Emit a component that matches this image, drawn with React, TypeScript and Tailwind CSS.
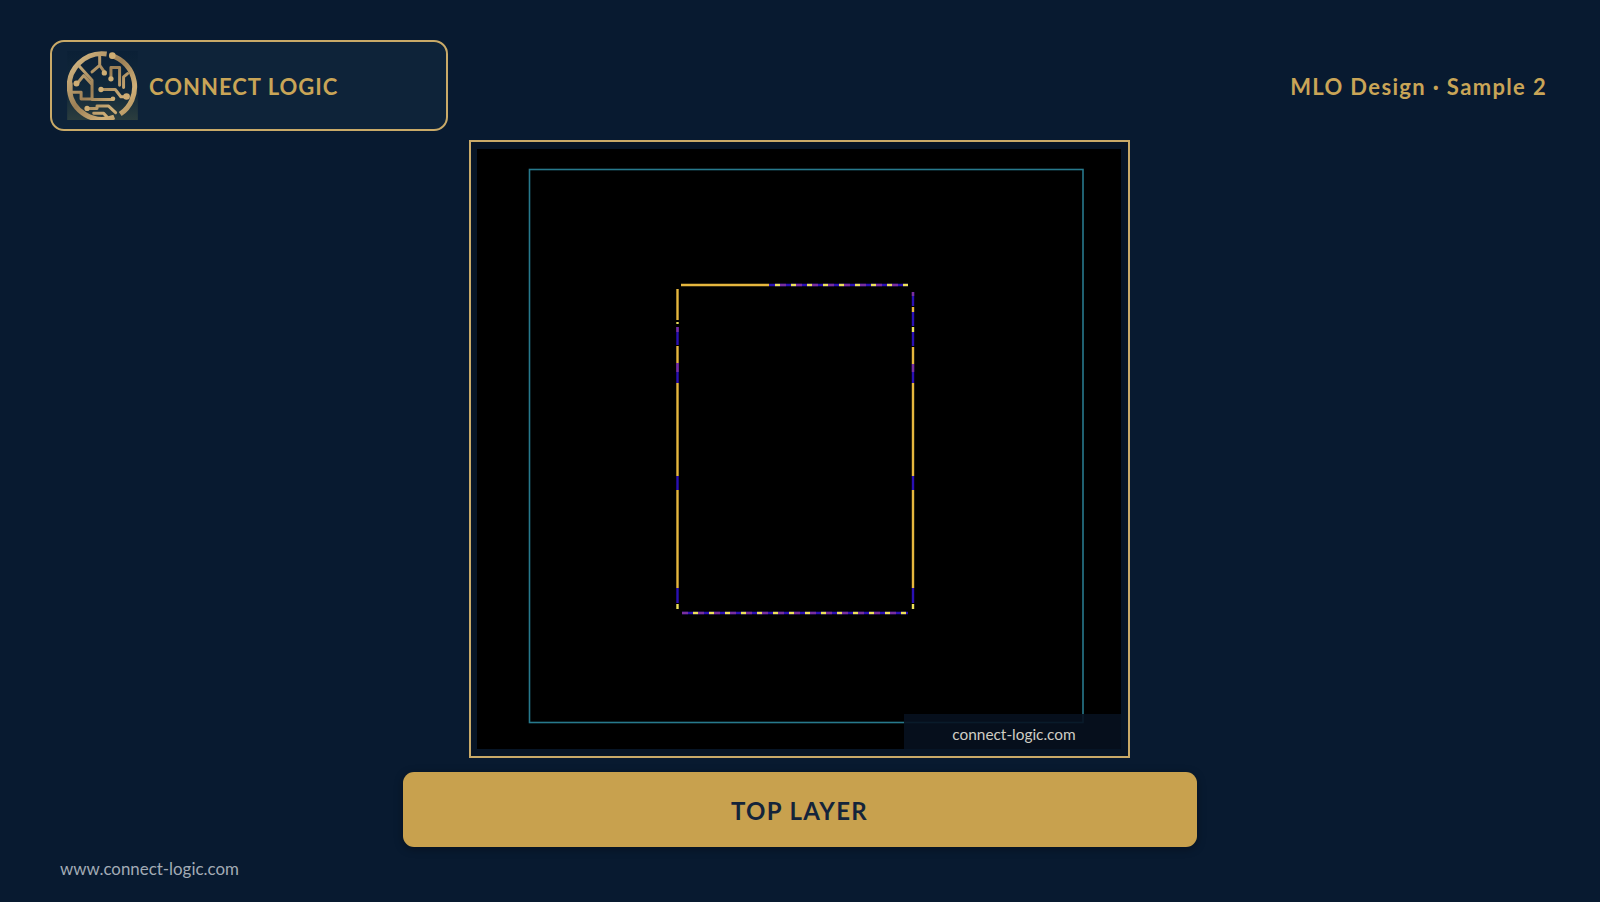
const GOLD = "#e6b73e";
const YELLOW = "#ece05a";
const BLUE = "#2a10b4";
const PURPLE = "#7a2f9e";

// [start, end, colour] runs along each edge of the board outline
type Run = [number, number, string];

function dashedRuns(from: number, to: number, firstDash: number): Run[] {
  const runs: Run[] = [];
  runs.push([from, to, BLUE]);
  for (let x = firstDash - 16; x < to; x += 16) {
    if (x + 5 < from) continue;
    if (x + 11 <= to) runs.push([x + 5, x + 11, PURPLE]);
    if (x >= from) runs.push([x, x + 5, YELLOW]);
  }
  return runs;
}

const topRuns: Run[] = [[681, 769, GOLD], ...dashedRuns(769, 908, 791)];
const bottomRuns: Run[] = dashedRuns(682, 908, 693);
const leftRuns: Run[] = [
  [289, 320, GOLD],
  [322, 324, YELLOW],
  [327, 345, BLUE],
  [327, 332, PURPLE],
  [346, 363, GOLD],
  [363, 383, BLUE],
  [363, 372, PURPLE],
  [383, 476, GOLD],
  [476, 490, BLUE],
  [490, 588, GOLD],
  [588, 603, BLUE],
  [604, 609, YELLOW],
];
const rightRuns: Run[] = [
  [292, 306, BLUE],
  [292, 296, PURPLE],
  [307, 312, GOLD],
  [312, 326, BLUE],
  [327, 332, YELLOW],
  [332, 346, BLUE],
  [347, 364, GOLD],
  [364, 383, BLUE],
  [364, 372, PURPLE],
  [383, 476, GOLD],
  [476, 490, BLUE],
  [490, 588, GOLD],
  [588, 603, BLUE],
  [604, 609, YELLOW],
];

function LayerDrawing() {
  return (
    <svg viewBox="477 149 644 600" className="block w-[644px] h-[600px]">
      <rect x="529.5" y="169.5" width="553.5" height="553" fill="none" stroke="#27798c" strokeWidth="1.6" />
      {topRuns.map(([a, b, c], i) => (
        <line key={"t" + i} x1={a} x2={b} y1="285" y2="285" stroke={c} strokeWidth="2.4" />
      ))}
      {bottomRuns.map(([a, b, c], i) => (
        <line key={"b" + i} x1={a} x2={b} y1="613" y2="613" stroke={c} strokeWidth="2.4" />
      ))}
      {leftRuns.map(([a, b, c], i) => (
        <line key={"l" + i} x1="677.5" x2="677.5" y1={a} y2={b} stroke={c} strokeWidth="2.4" />
      ))}
      {rightRuns.map(([a, b, c], i) => (
        <line key={"r" + i} x1="913" x2="913" y1={a} y2={b} stroke={c} strokeWidth="2.4" />
      ))}
    </svg>
  );
}

function Logo() {
  return (
    <svg viewBox="80 62 213 208" className="block w-[71px] h-[69px] shrink-0">
      <defs>
        <linearGradient id="logoBg" x1="0" y1="0" x2="0" y2="1">
          <stop offset="0" stopColor="#0b2036" />
          <stop offset="0.6" stopColor="#12293a" />
          <stop offset="1" stopColor="#2b3d3e" />
        </linearGradient>
        <linearGradient id="logoGold" gradientUnits="userSpaceOnUse" x1="90" y1="70" x2="285" y2="265">
          <stop offset="0" stopColor="#dcc08a" />
          <stop offset="0.45" stopColor="#9c7f55" />
          <stop offset="0.75" stopColor="#d0b078" />
          <stop offset="1" stopColor="#ab8b58" />
        </linearGradient>
      </defs>
      <rect x="80" y="62" width="213" height="208" fill="url(#logoBg)" />
      <g fill="none" stroke="url(#logoGold)" strokeWidth="9" strokeLinejoin="round" strokeLinecap="round">
        <path strokeWidth="15" strokeLinecap="butt" d="M199 71 A99 99 0 1 0 222 261 M212 75 A99 99 0 0 1 240 252" />
        <path d="M178 78 V105 L155 125 M178 105 L192 125" />
        <path d="M114 105 L155 150 V208 H218" />
        <path d="M110 160 L130 136 L152 160" />
        <path d="M92 160 V186 H122 V207 H155" />
        <path d="M212 145 V112 H238 V165" />
        <path d="M262 130 L250 140 V172" />
        <path d="M182 178 H225 L242 200 H258" />
        <path d="M140 235 H170 V228 H205 L226 248" />
        <path d="M160 250 H190 L205 266" />
      </g>
      <g fill="#cfae74">
        <circle cx="192" cy="128" r="8" />
        <circle cx="212" cy="146" r="8" />
        <circle cx="108" cy="160" r="9" />
        <circle cx="182" cy="178" r="8" />
        <circle cx="218" cy="206" r="7" />
        <circle cx="259" cy="199" r="10" />
        <circle cx="140" cy="235" r="8" />
        <circle cx="216" cy="76" r="10" />
      </g>
    </svg>
  );
}

export default function App() {
  return (
    <div className="w-[1600px] h-[902px] overflow-hidden bg-[#081a30] pt-10 font-[Lato,sans-serif]">
      <header className="flex items-center justify-between pl-[50px] pr-[53px]">
        <div className="flex items-center gap-[11px] w-[398px] h-[91px] pl-[15px] rounded-[14px] border-2 border-[#c9aa68] bg-[#0e2339]">
          <Logo />
          <div className="pt-[2px] text-[22px] font-bold tracking-[1px] text-[#c9a557]">CONNECT LOGIC</div>
        </div>
        <div className="pt-[1px] text-[22px] font-bold tracking-[1.35px] text-[#c9a557]">MLO Design · Sample 2</div>
      </header>

      <main className="flex flex-col items-center mt-[9px]">
        <div className="mr-px w-[661px] h-[618px] border-2 border-[#c9aa68] bg-[#071526] p-[7px] pl-[6px]">
          <div className="relative bg-black w-[644px] h-[600px]">
            <LayerDrawing />
            <div className="absolute right-0 bottom-0 w-[217px] h-[35px] flex items-center justify-center pl-[3px] pt-[6px] bg-[#07111f]/90 text-[15.4px] text-[#cfcdc4]">
              connect-logic.com
            </div>
          </div>
        </div>
        <div className="mr-px mt-[14px] w-[794px] h-[75px] flex items-center justify-center pt-[3px] rounded-[11px] bg-[#c8a14e] shadow-[0_2px_8px_rgba(0,0,0,0.35)] text-[24px] font-bold tracking-[1.3px] text-[#14243a]">
          TOP LAYER
        </div>
      </main>

      <footer className="mt-[9px] pl-[60px] text-[16.9px] text-[#a2abb5]">www.connect-logic.com</footer>
    </div>
  );
}
